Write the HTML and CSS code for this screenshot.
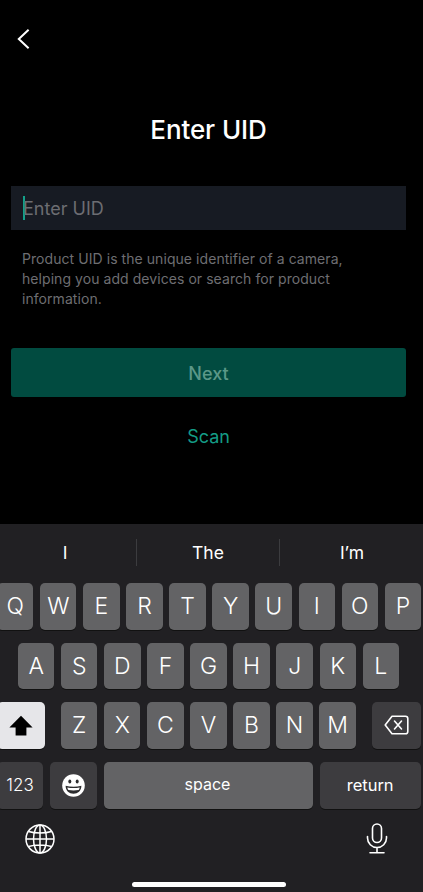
FILE: index.html
```html
<!DOCTYPE html>
<html lang="en">
<head>
<meta charset="utf-8">
<title>Enter UID</title>
<link rel="stylesheet" href="styles.css">
</head>
<body>
<div class="screen">
  <main class="content">
    <button class="back" aria-label="Back">
      <svg width="14" height="22" viewBox="0 0 14 22"><path d="M12.600 1.800 2.800 11l9.800 9.200" fill="none" stroke="#fff" stroke-width="2"/></svg>
    </button>
    <h1 class="title">Enter UID</h1>
    <div class="field"><span class="caret"></span><span class="placeholder">Enter UID</span></div>
    <p class="help">Product UID is the unique identifier of a camera, helping you add devices or search for product information.</p>
    <button class="next">Next</button>
    <div class="scan">Scan</div>
  </main>
  <section class="keyboard">
    <div class="suggestions">
      <div class="suggestion first">I</div>
      <div class="suggestion sep">The</div>
      <div class="suggestion sep last">I’m</div>
    </div>
    <div class="row row1">
      <div class="key">Q</div><div class="key">W</div><div class="key">E</div><div class="key">R</div><div class="key">T</div><div class="key">Y</div><div class="key">U</div><div class="key">I</div><div class="key">O</div><div class="key">P</div>
    </div>
    <div class="row row2">
      <div class="key">A</div><div class="key">S</div><div class="key">D</div><div class="key">F</div><div class="key">G</div><div class="key">H</div><div class="key">J</div><div class="key">K</div><div class="key">L</div>
    </div>
    <div class="row row3">
      <div class="key shift">
        <svg width="24" height="21" viewBox="0 0 24 21"><path d="M12 .8 23.600 12.600H17.400V20.600H6.600V12.600H.4Z" fill="#000"/></svg>
      </div>
      <div class="letters">
        <div class="key">Z</div><div class="key">X</div><div class="key">C</div><div class="key">V</div><div class="key">B</div><div class="key">N</div><div class="key">M</div>
      </div>
      <div class="key dark del">
        <svg width="25" height="20" viewBox="0 0 25 20"><path d="M8 1.200H21.500A2.300 2.300 0 0 1 23.800 3.500V16.500A2.300 2.300 0 0 1 21.500 18.800H8L1.200 10Z" fill="none" stroke="#fff" stroke-width="1.600" stroke-linejoin="round"/><path d="M10.500 6 17.500 14M17.500 6 10.500 14" stroke="#fff" stroke-width="1.600" stroke-linecap="round"/></svg>
      </div>
    </div>
    <div class="row row4">
      <div class="key dark num">123</div>
      <div class="key dark emoji">
        <svg width="23" height="23" viewBox="0 0 23 23"><circle cx="11.500" cy="11.500" r="11.300" fill="#fff"/><ellipse cx="7.800" cy="7.500" rx="1.500" ry="2.100" fill="#2c2c2e"/><ellipse cx="15.200" cy="7.500" rx="1.500" ry="2.100" fill="#2c2c2e"/><path d="M3.600 11.800C8.500 13.200 14.500 13.200 19.400 11.800 19.400 16.800 15.800 19.800 11.500 19.800S3.600 16.800 3.600 11.800Z" fill="#2c2c2e"/><path d="M5.300 13.400C9 14.300 14 14.300 17.700 13.400 17.500 14.800 17 15.500 16.600 16 13 16.600 10 16.600 6.400 16 5.900 15.400 5.500 14.700 5.300 13.400Z" fill="#fff"/></svg>
      </div>
      <div class="key space">space</div>
      <div class="key dark ret">return</div>
    </div>
    <div class="tools">
      <svg width="30" height="30" viewBox="0 0 30 30" fill="none" stroke="#fff" stroke-width="1.500"><circle cx="15" cy="15" r="14"/><ellipse cx="15" cy="15" rx="6.500" ry="14"/><path d="M15 1V29M1 15H29M3.500 7.500C10 9.500 20 9.500 26.500 7.500M3.500 22.500C10 20.500 20 20.500 26.500 22.500"/></svg>
      <svg class="mic" width="22" height="31" viewBox="0 0 22 31" fill="none" stroke="#fff" stroke-width="1.600" stroke-linecap="round"><rect x="6.500" y="1" width="9" height="18.500" rx="4.500"/><path d="M1.500 13.500V15A9.500 9.500 0 0 0 20.500 15V13.500M11 24.500V29.800M4 29.800H18"/></svg>
    </div>
    <div class="home"></div>
  </section>
</div>
</body>
</html>
```

FILE: styles.css
```css
* { box-sizing: border-box; }
html, body { margin: 0; padding: 0; background: #000; }
body { font-family: Inter, "Liberation Sans", sans-serif; }
.screen { width: 423px; height: 892px; overflow: hidden; display: flex; flex-direction: column; }
.content { height: 524px; padding: 28px 17px 0 11px; display: flex; flex-direction: column; }
.back { width: 14px; height: 22px; margin-left: 5px; padding: 0; border: 0; background: none; display: block; }
.title { margin: 64px 0 0; height: 32px; font-size: 26px; line-height: 32px; font-weight: 500; color: #fff; text-align: center; letter-spacing: -0.1px; }
.field { margin-top: 40px; height: 44px; background: #171b23; display: flex; align-items: center; padding-left: 12px; }
.caret { width: 2px; height: 24px; background: #14a08a; margin-top: -1px; }
.placeholder { margin-left: -2px; padding-top: 1px; font-size: 18px; color: #6c6d72; }
.help { margin: 19px 0 0; padding: 0 32px 0 11px; font-size: 14px; line-height: 20px; color: #6e6e72; letter-spacing: 0.06px; }
.next { margin-top: 39px; height: 49px; width: 395px; border: 0; border-radius: 3px; background: #014b40; color: #5b9888; font: 500 18px Inter, sans-serif; padding: 1px 0 0; }
.scan { margin-top: 28px; height: 24px; line-height: 24px; text-align: center; font-size: 18px; color: #149c86; }
.keyboard { flex: 1; background: #212023; position: relative; }
.suggestions { height: 59px; display: flex; padding-top: 15px; }
.suggestion { flex: 0 0 143px; height: 27px; text-align: center; line-height: 28px; color: #fff; font-size: 17.500px; }
.first { flex-basis: 136px; padding-right: 6px; }
.last { flex-basis: 144px; padding-left: 1px; }
.sep { border-left: 1px solid #3c3c3f; }
.row { display: flex; gap: 6.700px; height: 46.500px; margin-bottom: 13px; }
.row1 { margin-left: -3px; }
.row2 { margin-left: 18px; }
.row3 { margin-left: -3px; }
.row4 { margin-left: -3px; height: 47px; }
.letters { display: flex; gap: 6.700px; margin-left: 9.300px; }
.key { flex: 0 0 36.400px; height: 100%; border-radius: 5px; background: #636365; box-shadow: 0 1px 0 #111; color: #fff; font-size: 23px; font-weight: 300; display: flex; align-items: center; justify-content: center; }
.dark { background: #3d3c3f; }
.shift { flex-basis: 48px; background: #e6e6e9; }
.del { flex-basis: 49px; margin-left: 9.300px; }
.num { flex-basis: 46px; font-size: 17px; }
.emoji { flex-basis: 47.600px; }
.space { flex-basis: 209px; font-size: 16px; font-weight: 400; padding: 0 2px 3px 0; }
.ret { flex-basis: 101px; font-size: 16.500px; font-weight: 400; }
.tools { display: flex; justify-content: space-between; padding: 0 35px 0 25px; margin-top: 15px; }
.mic { margin-top: -1px; }
.home { position: absolute; left: 132px; bottom: 5px; width: 154px; height: 5px; border-radius: 3px; background: #fff; }
```
